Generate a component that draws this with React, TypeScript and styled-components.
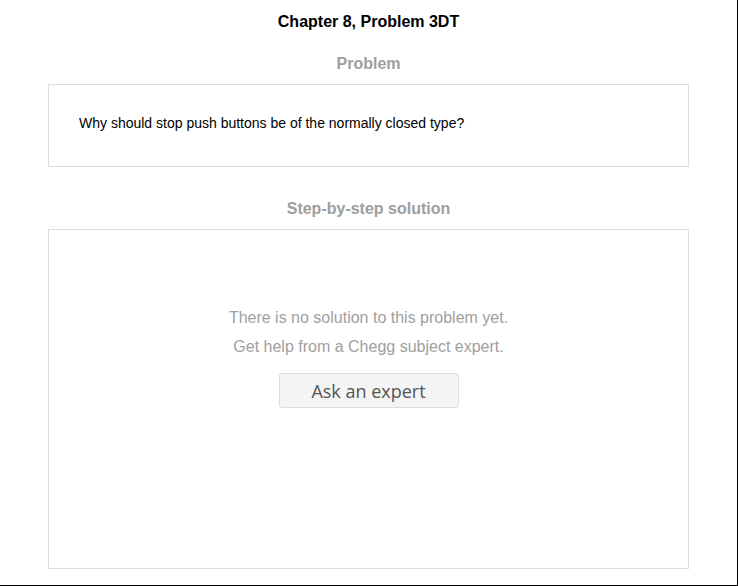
import React from "react";
import styled, { createGlobalStyle } from "styled-components";

const Global = createGlobalStyle`
  html, body { margin: 0; padding: 0; background: #fff; }
  body { font-family: "Liberation Sans", Arial, sans-serif; }
`;

const Frame = styled.div`
  width: 738px;
  height: 586px;
  box-sizing: border-box;
  border-right: 1px solid #000;
  border-bottom: 1px solid #000;
  padding: 13px 48px 0;
  display: flex;
  flex-direction: column;
  overflow: hidden;
`;

const Title = styled.h1`
  margin: 0;
  font-size: 16px;
  line-height: 18px;
  font-weight: 700;
  color: #000;
  text-align: center;
`;

const SectionHeading = styled.h2<{ $top: number }>`
  margin: ${(p) => p.$top}px 0 11px;
  font-size: 16px;
  line-height: 18px;
  font-weight: 700;
  color: #9e9e9e;
  text-align: center;
`;

const ProblemBox = styled.div`
  box-sizing: border-box;
  height: 83px;
  border: 1px solid #dedede;
  padding: 30px 30px 0;
  font-size: 14px;
  line-height: 16px;
  color: #000;
`;

const SolutionBox = styled.div`
  box-sizing: border-box;
  height: 340px;
  border: 1px solid #dedede;
  padding-top: 73px;
  display: flex;
  flex-direction: column;
  align-items: center;
`;

const Note = styled.p`
  margin: 0;
  font-size: 16px;
  line-height: 29px;
  color: #a0a0a0;
  text-align: center;
`;

const ExpertButton = styled.button`
  margin-top: 12px;
  width: 180px;
  height: 35px;
  box-sizing: border-box;
  background: #f4f4f4;
  border: 1px solid #dcdcdc;
  border-radius: 3px;
  font-family: "Open Sans", "Noto Sans", sans-serif;
  font-size: 18px;
  color: #555;
  cursor: pointer;
  padding: 0;
`;

export default function App() {
  return (
    <>
      <Global />
      <Frame>
        <Title>Chapter 8, Problem 3DT</Title>
        <SectionHeading $top={24}>Problem</SectionHeading>
        <ProblemBox>Why should stop push buttons be of the normally closed type?</ProblemBox>
        <SectionHeading $top={33}>Step-by-step solution</SectionHeading>
        <SolutionBox>
          <Note>There is no solution to this problem yet.</Note>
          <Note>Get help from a Chegg subject expert.</Note>
          <ExpertButton>Ask an expert</ExpertButton>
        </SolutionBox>
      </Frame>
    </>
  );
}
